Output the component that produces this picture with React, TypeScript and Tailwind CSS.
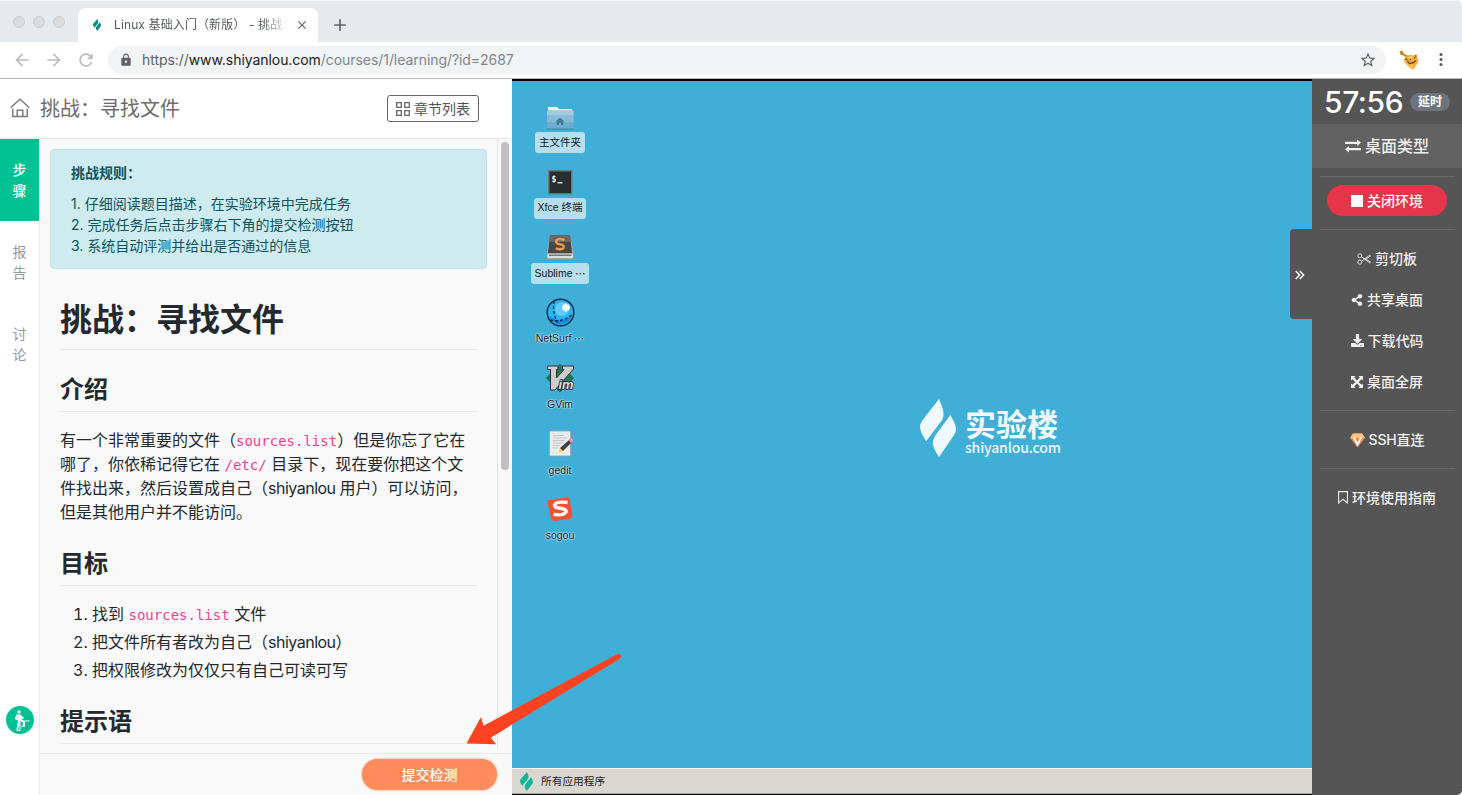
import type { ReactNode } from "react";
import { MdArrowBack, MdArrowForward, MdRefresh, MdLock, MdStarBorder, MdMoreVert, MdClose, MdAdd } from "react-icons/md";
import { FaShareAlt, FaDownload } from "react-icons/fa";

function Leaves({ className }: { className: string }) {
  return (
    <svg viewBox="0 0 104 172" className={className} fill="currentColor" preserveAspectRatio="none">
      <path d="M55 0 C61 16 68 28 68 46 C68 58 62 66 55 74 L18 125 C10 110 0 98 0 82 C0 72 6 64 12 56 Z" />
      <path d="M88 47 C94 62 104 74 104 90 C104 100 99 106 93 115 L55 172 C47 158 37 146 37 130 C37 118 42 112 48 103 Z" />
    </svg>
  );
}

function BrowserChrome() {
  return (
    <div className="shrink-0">
      <div className="flex h-[42px] items-end rounded-tr-[6px] border-t border-[#f3f5f6] bg-[#e6eaed]">
        <div className="flex h-[41px] w-[78px] items-center gap-2 pl-[13px]">
          <span className="size-3 rounded-full border border-[#cfcfcf] bg-[#dcdcdc]" />
          <span className="size-3 rounded-full border border-[#cfcfcf] bg-[#dcdcdc]" />
          <span className="size-3 rounded-full border border-[#cfcfcf] bg-[#dcdcdc]" />
        </div>
        <div className="flex h-[34px] w-[240px] items-center rounded-t-lg bg-white pl-[15px]">
          <Leaves className="h-[12px] w-[8px] text-[#0b8a80]" />
          <div className="ml-[13px] w-[174px] whitespace-pre bg-gradient-to-r from-[#50555a] from-85% to-[#ffffff] bg-clip-text font-['Inter','Noto_Sans_CJK_SC',sans-serif] text-[12px] leading-5 tracking-[0.01em] text-transparent">
            Linux 基础入门（新版） - 挑战：
          </div>
          <MdClose className="ml-[7px] size-[14px] text-[#5f6368]" />
        </div>
        <MdAdd className="mb-[7px] ml-[12px] size-5 text-[#5f6368]" />
      </div>
      <div className="flex h-[37px] items-center border-b border-[#b5b5b5] bg-white pl-[12px]">
        <MdArrowBack className="size-5 text-[#babcbe]" />
        <MdArrowForward className="ml-[12px] size-5 text-[#babcbe]" />
        <MdRefresh className="ml-[12px] size-5 text-[#babcbe]" />
        <div className="ml-3 flex h-7 w-[1278px] items-center rounded-full bg-[#f1f3f4] pl-[11px] pr-[9px]">
          <MdLock className="size-[14px] text-[#5f6368]" />
          <div className="ml-[9px] font-['Inter',sans-serif] text-[14px] leading-5 tracking-[-0.06px] text-[#80868b]">
            <span className="text-[#5f6368]">https://</span>
            <span className="text-[#202124]">www.shiyanlou.com</span>/courses/1/learning/?id=2687
          </div>
          <MdStarBorder className="ml-auto size-[18px] text-[#5f6368]" />
        </div>
        <svg viewBox="0 0 20 20" className="ml-[13px] size-5">
          <path d="M.6 1.6 L3.6 .4 L4.6 3.6 L9.6 6 L8.6 8 L3.4 5 L1.6 5Z" fill="#c9821f" />
          <path d="M7.5 6 Q11 4 14.5 5.6 L17.6 4.2 L18 7.4 L19.4 9 Q19.6 13 17.2 15.4 L15 19 L12.6 19.4 L8 14.8 L5.2 11.6 Q4.4 8 7.5 6Z" fill="#f4ae3c" />
          <path d="M8.4 7.4 Q12 5.8 14 7.4 L12 9Z M14 15.4 L13.6 18 L10.5 16.2Z" fill="#ffd777" />
          <path d="M6.4 9.6 L8.2 8.8 M9.4 13.2 Q14.5 14 16.8 10.4 M15.2 7.4 L16.2 8.2 M10.8 9 L12 9.8 M16.4 5.4 L17.2 6.6 M8.6 10.8 L9.6 12.8" stroke="#6d431d" strokeWidth="1.3" fill="none" />
        </svg>
        <svg viewBox="0 0 20 20" className="ml-[12px] size-5" fill="#55585c">
          <circle cx="10" cy="4.6" r="1.5" />
          <circle cx="10" cy="9.6" r="1.5" />
          <circle cx="10" cy="14.6" r="1.5" />
        </svg>
      </div>
    </div>
  );
}

function VerticalTab({ chars, active }: { chars: [string, string]; active?: boolean }) {
  return (
    <div
      className={
        active
          ? "flex h-[82px] flex-col items-center justify-center bg-[#00c194] text-[14px] font-medium leading-[21px] text-white"
          : "flex h-[82px] flex-col items-center justify-center text-[14px] leading-[21px] text-[#999]"
      }
    >
      <span>{chars[0]}</span>
      <span>{chars[1]}</span>
    </div>
  );
}

function Heading({ children }: { children: ReactNode }) {
  return <h2 className="border-b border-[#e8eaec] pb-[6px] text-[24px] font-bold leading-[30px]">{children}</h2>;
}

function Code({ children }: { children: ReactNode }) {
  return <code className="font-['DejaVu_Sans_Mono',monospace] text-[14px] leading-none text-[#f03f92]">{children}</code>;
}

function LessonPanel() {
  return (
    <div className="flex w-[512px] shrink-0 flex-col bg-white">
      <div className="flex h-[60px] shrink-0 items-center border-b border-[#e9e9e9] pl-[10px] pr-[33px]">
        <svg viewBox="0 0 20 20" className="mb-[2px] size-5" fill="none" stroke="#7c7c7c" strokeWidth="1.5">
          <path d="M.8 9.5 L10 1.2 L19.2 9.5" />
          <path d="M2.8 10.5 V18.4 H17.2 V10.5 M7.2 18.4 V12.2 H12.8 V18.4" />
        </svg>
        <span className="ml-[10px] text-[20px] leading-8 text-[#6c6c6c]">挑战：寻找文件</span>
        <div className="ml-auto flex h-[27px] w-[92px] items-center rounded-[3px] border border-[#666] pl-2">
          <svg viewBox="0 0 14 14" className="size-[14px]" fill="none" stroke="#666" strokeWidth="1.3">
            <path d="M.7 .7 H5.3 V5.3 H.7Z M8.7 .7 H13.3 V5.3 H8.7Z M.7 8.7 H5.3 V13.3 H.7Z M8.7 8.7 H13.3 V13.3 H8.7Z" />
          </svg>
          <span className="ml-1 text-[14px] leading-5 text-[#555]">章节列表</span>
        </div>
      </div>
      <div className="flex min-h-0 flex-1">
        <div className="flex w-[40px] shrink-0 flex-col border-r border-[#ebebeb]">
          <VerticalTab chars={["步", "骤"]} active />
          <VerticalTab chars={["报", "告"]} />
          <VerticalTab chars={["讨", "论"]} />
          <svg viewBox="0 0 28 28" className="mb-[61px] ml-[6px] mt-auto size-7">
            <circle cx="14" cy="14" r="14" fill="#00c194" />
            <circle cx="13" cy="6" r="1.7" fill="#fff" />
            <path d="M10.5 8.5 H14.5 L16.2 11.5 L16 15.5 H12 L11.5 12Z" fill="#fff" />
            <path d="M11 9 L9.7 12.5 L12 13.5 M15 10 L17.5 12.5 M13 15 L12.2 19 L11.2 23.8 M15.5 14.5 L17.8 15.5 L17.5 20" fill="none" stroke="#fff" strokeWidth="1.6" />
            <path d="M17.5 15 H23.5 M14 16 V24.5 H10.5 M18.5 15 V20.5 H15.5" fill="none" stroke="#fff" strokeWidth="1" />
          </svg>
        </div>
        <div className="flex min-w-0 flex-1 flex-col bg-[#f9f9f9]">
          <div className="flex min-h-0 flex-1">
            <div className="mb-[5px] w-[458px] overflow-hidden whitespace-nowrap border-r border-[#e4e6e8] px-[10px] pt-[10px] text-[#24292e]">
              <div className="h-[120px] w-[437px] rounded-[4px] border border-[#b8e5e9] bg-[#ceebef] px-5 py-3 text-[14px] leading-[21px] text-[#0c5460]">
                <div className="mb-[10px] font-bold">挑战规则：</div>
                <div>1. 仔细阅读题目描述，在实验环境中完成任务</div>
                <div>2. 完成任务后点击步骤右下角的提交检测按钮</div>
                <div>3. 系统自动评测并给出是否通过的信息</div>
              </div>
              <div className="w-[427px] pl-[10px]">
                <h1 className="mt-[31px] border-b border-[#e8eaec] pb-[9px] text-[32px] font-bold leading-[40px]">挑战：寻找文件</h1>
                <div className="mt-[25px]"><Heading>介绍</Heading></div>
                <p className="mt-[16px] text-[16px] leading-6">
                  有一个非常重要的文件（<Code>sources.list</Code>）但是你忘了它在<br />
                  哪了，你依稀记得它在 <Code>/etc/</Code> 目录下，现在要你把这个文<br />
                  件找出来，然后设置成自己（<span className="tracking-[-0.5px]">shiyanlou </span>用户）可以访问，<br />
                  但是其他用户并不能访问。
                </p>
                <div className="mt-[25px]"><Heading>目标</Heading></div>
                <ol className="mt-[16px] flex list-decimal flex-col gap-1 pl-8 text-[16px] leading-6">
                  <li>找到 <Code>sources.list</Code> 文件</li>
                  <li>把文件所有者改为自己（<span className="tracking-[-0.5px]">shiyanlou</span>）</li>
                  <li>把权限修改为仅仅只有自己可读可写</li>
                </ol>
                <div className="mt-[25px]"><Heading>提示语</Heading></div>
              </div>
            </div>
            <div className="flex flex-1 justify-center pt-[3px]">
              <div className="h-[328px] w-2 rounded-full bg-[#c1c1c1]" />
            </div>
          </div>
          <div className="flex h-[42px] shrink-0 items-center justify-end border-t border-[#ebebeb] pr-[15px]">
            <div className="flex h-[31px] w-[135px] items-center justify-center rounded-full bg-[#ff8c5c] text-[14px] font-medium text-white shadow-[0_0_2px_#ff8c5c]">提交检测</div>
          </div>
        </div>
      </div>
    </div>
  );
}

function DesktopItem({ label, more, boxed, children }: { label: string; more?: boolean; boxed?: boolean; children: ReactNode }) {
  return (
    <div className="flex flex-col items-center">
      <svg viewBox="0 0 28 28" className="size-7 overflow-visible">{children}</svg>
      <div
        className={
          boxed
            ? "flex h-[21px] items-center whitespace-pre rounded-[3px] bg-[#b5dfed] px-1 text-[10.5px] text-[#151515]"
            : "flex h-[21px] items-center whitespace-pre px-1 text-[10.5px] text-[#111] [text-shadow:0_0_2px_#d5f3ff,0_0_2px_#d5f3ff,0_0_1px_#d5f3ff]"
        }
      >
        {label}
        {more && <span lang="zh-CN" className="font-['Noto_Sans_CJK_SC',sans-serif]"> …</span>}
      </div>
    </div>
  );
}

function Desktop() {
  return (
    <div className="relative flex w-[800px] shrink-0 flex-col border-b border-t-2 border-black bg-[#3fafd7]">
      <div className="flex min-h-0 flex-1">
        <div className="flex w-24 flex-col gap-[16.6px] pt-[23px] font-['Liberation_Sans','Noto_Sans_CJK_SC',sans-serif]">
          <DesktopItem label="主文件夹" boxed>
            <path d="M2 3 H11 L13 5 H26 V12 H2Z" fill="#f4f8fa" />
            <rect x="1" y="6.5" width="26.5" height="18.5" rx="1" fill="#6fadd0" />
            <rect x="1" y="6.5" width="26.5" height="6" rx="1" fill="#a3cbe0" />
            <rect x="1" y="11" width="26.5" height="7" fill="#86bad8" />
            <path d="M1 25 H27.5" stroke="#487f9f" />
            <path d="M14 13.5 L18.5 17.5 H17.3 V21 H15 V19 H13 V21 H10.7 V17.5 H9.5Z" fill="#417b9c" />
          </DesktopItem>
          <DesktopItem label="Xfce 终端" boxed>
            <rect x="2" y="0" width="24.5" height="24.5" rx="1" fill="#6e7577" />
            <rect x="3.5" y="1.5" width="21.5" height="21.5" fill="#282e30" />
            <text x="5.5" y="11.5" fontFamily="DejaVu Sans Mono" fontSize="8" fontWeight="bold" fill="#fff">$</text>
            <path d="M11.5 12.8 H16.5" stroke="#fff" strokeWidth="1.2" />
          </DesktopItem>
          <DesktopItem label="Sublime" more boxed>
            <path d="M3.5 0 H24.5 L27.5 18 V24 H1 V18Z" fill="#a7a7a7" />
            <path d="M4 0 H24 L26 18 H2Z" fill="#484848" />
            <path d="M4 0 H24 L25 7 H3Z" fill="#686868" />
            <path d="M1.5 19 H27 V23 H1.5Z" fill="#ddd" />
            <path d="M3 19.5 H25.5 V21 H3Z" fill="#777" />
            <path d="M18.5 4.8 Q12.5 3.2 10.5 5.2 Q9.3 8 12 8.8 L16.5 9.8 Q18.8 11.6 17 13.6 Q14 15 9.8 13.4" fill="none" stroke="#f79a45" strokeWidth="2.3" />
          </DesktopItem>
          <DesktopItem label="NetSurf" more>
            <circle cx="14.5" cy="11.5" r="13.3" fill="#2bb4f5" stroke="#06283e" strokeWidth="1.4" />
            <path d="M3 15 A12 12 0 0 0 26 14 Q16 24 3 15Z" fill="#0b8be0" />
            <circle cx="16" cy="8" r="7" fill="#5fcfff" />
            <path d="M8 0 Q6 14 13 24 M4 19 Q16 22 27 13" fill="none" stroke="#06283e" strokeWidth="1.3" strokeDasharray="3 2" />
            <path d="M20 2.5 V10.5 M16 6.5 H24 M17.2 3.7 L22.8 9.3 M22.8 3.7 L17.2 9.3" stroke="#fff" strokeWidth="2" />
          </DesktopItem>
          <DesktopItem label="GVim">
            <path d="M14 -1.5 L27.5 12 L14 26 L.5 12Z" fill="#257658" stroke="#164c39" strokeWidth=".8" />
            <path d="M1.5 0 H12 V3.5 H10.5 V12 L18 3.5 H16.5 V0 H27.5 V3 L9 24 H4.5 V3.5 H1.5Z" fill="#ccc" stroke="#333" strokeWidth="1" />
            <text x="12.5" y="23" fontFamily="Liberation Sans" fontSize="12" fontStyle="italic" fontWeight="bold" fill="#ddd" stroke="#222" strokeWidth="1.4" paintOrder="stroke" textLength="15" lengthAdjust="spacingAndGlyphs">im</text>
          </DesktopItem>
          <DesktopItem label="gedit">
            <rect x="3.5" y="-1" width="21" height="25" rx="1" fill="#e8eaeb" stroke="#9ca4a7" strokeWidth=".8" />
            <path d="M7 3.5 H18 M7 6 H21 M7 8.5 H19 M7 11 H17 M7 13.5 H14 M7 16 H12" stroke="#c4c8ca" />
            <path d="M12.5 20.5 L14 16 L17 19Z" fill="#f2cc58" />
            <path d="M14 16 L23.5 7.5 L26 10 L17 19Z" fill="#444" />
            <path d="M22.5 8.3 L24.5 6.3 Q27.5 6 27 9.3 L25.2 11Z" fill="#d996c0" />
          </DesktopItem>
          <DesktopItem label="sogou">
            <path d="M1.5 2.5 L21 -1 Q23 -1 23.5 1 L26.5 18 Q26.5 20 24.5 20.7 L9 23 Q6 23 5 20 L1.5 5Z" fill="#f9512f" />
            <path d="M21.5 4.5 Q10 3 8.5 7 Q8.5 9.8 14 10.3 Q21 11 20 14 Q17 18 7.5 16.4" fill="none" stroke="#fff" strokeWidth="3.4" />
          </DesktopItem>
        </div>
        <div className="flex flex-1 items-start pl-[312px] pt-[318px] text-[#eef8fd]">
          <Leaves className="h-[58px] w-[36px]" />
          <div className="ml-[9px]">
            <div className="mt-[7px] font-['Noto_Sans_CJK_SC',sans-serif] text-[31px] font-bold leading-[33px]">实验楼</div>
            <div className="font-['Noto_Sans_CJK_SC',sans-serif] text-[14px] font-medium leading-[17px] tracking-[-0.14px]">shiyanlou.com</div>
          </div>
        </div>
      </div>
      <div className="flex h-[26px] items-center border-b border-t border-b-[#aaa8a3] border-t-[#f5f4f2] bg-[#dad7d1] pl-2">
        <Leaves className="h-[19px] w-[13px] text-[#10b894]" />
        <span className="ml-2 font-['Noto_Sans_CJK_SC',sans-serif] text-[10.7px] leading-4 text-[#222]">所有应用程序</span>
      </div>
      <div className="absolute right-0 top-[148px] flex h-[90px] w-[22px] items-center rounded-l-[4px] bg-[#555] pl-[5px] pt-[1px]">
        <svg viewBox="0 0 10 10" className="size-[10px]" fill="none" stroke="#fff" strokeWidth="1.4"><path d="M.8 1 L4.6 5 L.8 9 M4.8 1 L8.6 5 L4.8 9" /></svg>
      </div>
    </div>
  );
}

function Action({ icon, children }: { icon: ReactNode; children: ReactNode }) {
  return (
    <div className="flex h-[41px] items-center justify-center gap-[4px] text-[14px] font-medium leading-5 text-[#f0f0f0]">
      {icon}
      <span>{children}</span>
    </div>
  );
}

function ControlPanel() {
  return (
    <div className="flex w-[150px] shrink-0 flex-col rounded-br-[5px] bg-[#555]">
      <div className="flex h-[45px] items-center pl-[12px]">
        <span className="w-[79px] whitespace-nowrap text-[30px] font-medium leading-9 tracking-[-0.4px] text-white">57:56</span>
        <span className="ml-[7px] flex h-[18px] w-10 items-center justify-center rounded-full bg-[#6c757d] text-[12px] font-bold text-white">延时</span>
      </div>
      <div className="flex h-[44px] items-center justify-center gap-[4px] bg-[#626262] text-[16px] font-medium text-[#eee]">
        <svg viewBox="0 0 16 14" className="h-[14px] w-4" fill="#eee"><path d="M0 2.7 H12 V.6 L16 3.8 L12 7 V5 H0Z M16 11.3 H4 V13.4 L0 10.2 L4 7 V9 H16Z" /></svg>
        <span>桌面类型</span>
      </div>
      <div className="ml-2 mr-[7px] mt-2 border-t border-[#6a6a6a]" />
      <div className="mx-auto mt-2 flex h-[31px] w-[120px] items-center justify-center gap-[4px] rounded-full bg-[#e6344a] text-[14px] font-medium text-white">
        <span className="size-3 bg-white" />
        <span>关闭环境</span>
      </div>
      <div className="ml-2 mr-[7px] mt-[13px] border-t border-[#6a6a6a]" />
      <div className="pb-[8px] pt-[8px]">
        <Action icon={<svg viewBox="0 0 14 12" className="h-3 w-[14px]" fill="none" stroke="#ddd" strokeWidth="1"><circle cx="2.8" cy="2.8" r="2" /><circle cx="2.8" cy="9.2" r="2" /><path d="M4.6 3.8 L12.5 9.8 L13.5 9 L6.5 5 M4.6 8.2 L12.5 2.2 L13.5 3 L7.5 6.8" /></svg>}>剪切板</Action>
        <Action icon={<FaShareAlt className="size-[12px]" />}>共享桌面</Action>
        <Action icon={<FaDownload className="size-[13px]" />}>下载代码</Action>
        <Action icon={<svg viewBox="0 0 12 12" className="size-[12px]" fill="currentColor"><path d="M0 0 H4.6 L3.2 1.5 L6 4.4 L8.8 1.5 L7.4 0 H12 V4.6 L10.5 3.2 L7.6 6 L10.5 8.8 L12 7.4 V12 H7.4 L8.8 10.5 L6 7.6 L3.2 10.5 L4.6 12 H0 V7.4 L1.5 8.8 L4.4 6 L1.5 3.2 L0 4.6Z" /></svg>}>桌面全屏</Action>
      </div>
      <div className="ml-2 mr-[7px] border-t border-[#6a6a6a]" />
      <div className="py-2">
        <Action icon={<svg viewBox="0 0 15 15" className="mt-[2px] size-[15px]"><path d="M3 .5 H12 L15 5 L7.5 14.5 L0 5Z" fill="#ef8750" /><path d="M3 .5 H12 L15 5 H0Z" fill="#ffc27a" /><path d="M3.8 4.5 L7.5 11.5 L11.2 4.5" fill="none" stroke="#fff" strokeWidth="1.8" /></svg>}><span className="tracking-[-0.2px]">SSH</span>直连</Action>
      </div>
      <div className="ml-2 mr-[7px] border-t border-[#6a6a6a]" />
      <div className="pt-2">
        <Action icon={<svg viewBox="0 0 10 13" className="h-[13px] w-[10px]" fill="none" stroke="#eee" strokeWidth="1.1"><path d="M.6 .6 H9.4 V12 L5 8.3 L.6 12Z" /></svg>}>环境使用指南</Action>
      </div>
    </div>
  );
}

export default function App() {
  return (
    <div className="relative flex h-[795px] w-[1462px] flex-col overflow-hidden bg-white font-['Inter','Noto_Sans_CJK_SC',sans-serif]">
      <BrowserChrome />
      <div className="flex min-h-0 flex-1">
        <LessonPanel />
        <Desktop />
        <ControlPanel />
      </div>
      <svg viewBox="0 0 156 92" className="absolute left-[466px] top-[653px] h-[92px] w-[156px]">
        <path d="M.5 90.5 L15 64 L17.5 72.7 L151 1.2 Q154.5 .5 155.5 3 Q155.5 5 153 6.2 L24.7 84.7 L30.3 91.3Z" fill="#ff4322" />
      </svg>
    </div>
  );
}
